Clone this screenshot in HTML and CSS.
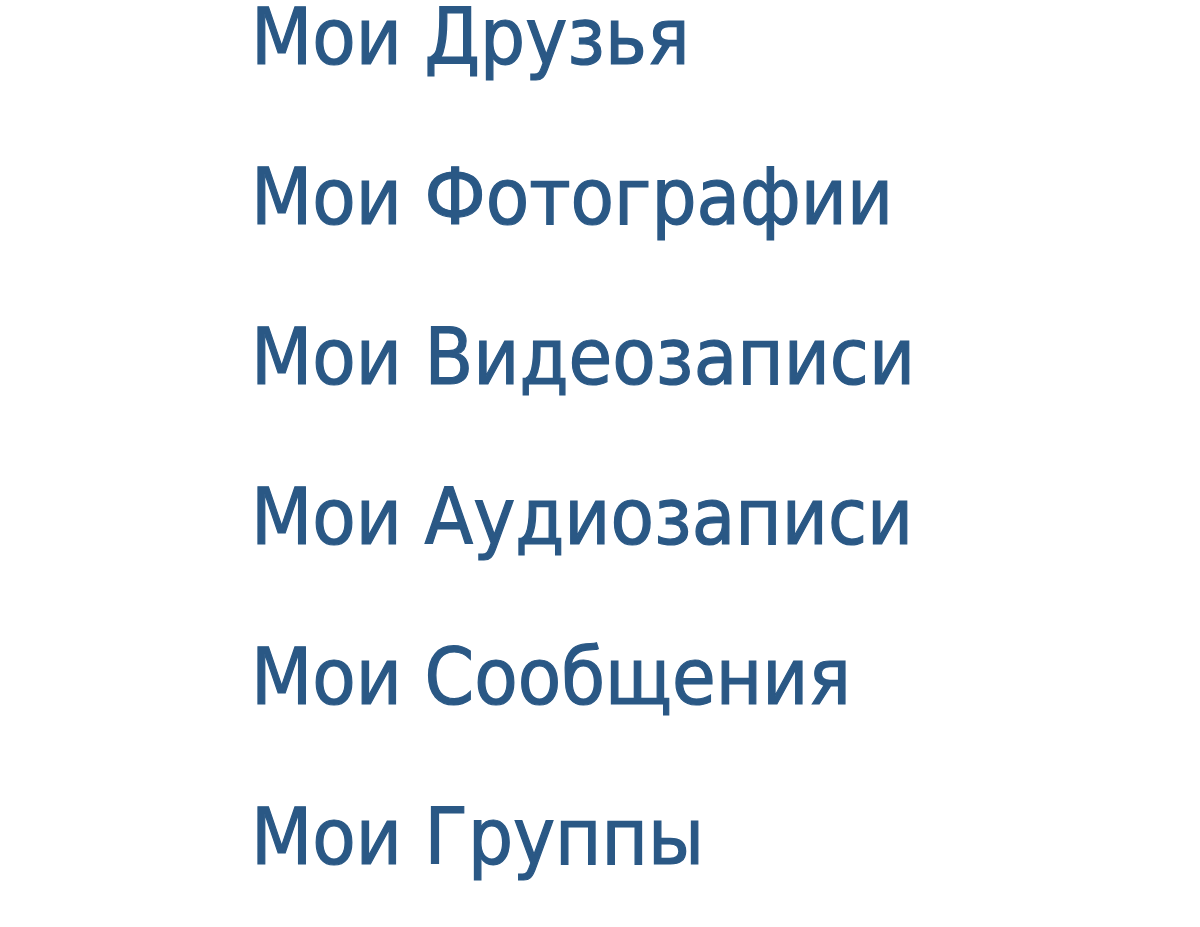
FILE: index.html
```html
<!DOCTYPE html>
<html lang="ru">
<head>
<meta charset="utf-8">
<link rel="stylesheet" href="styles.css">
</head>
<body>
<ul class="menu">
  <li><a href="#">Мои Друзья</a></li>
  <li><a href="#">Мои Фотографии</a></li>
  <li><a href="#">Мои Видеозаписи</a></li>
  <li><a href="#">Мои Аудиозаписи</a></li>
  <li><a href="#">Мои Сообщения</a></li>
  <li><a href="#">Мои Группы</a></li>
</ul>
</body>
</html>
```
FILE: styles.css
```css
html, body {
  margin: 0;
  padding: 0;
  background: #ffffff;
}
.menu {
  list-style: none;
  margin: -43px 0 0 0;
  padding: 0 0 0 251px;
  display: flex;
  flex-direction: column;
  font-family: "DejaVu Sans Condensed", "DejaVu Sans", sans-serif;
  font-size: 79px;
  line-height: 160px;
}
.menu a {
  color: #2a5885;
  text-decoration: none;
  -webkit-text-stroke: 1.2px #2a5885;
}
```
